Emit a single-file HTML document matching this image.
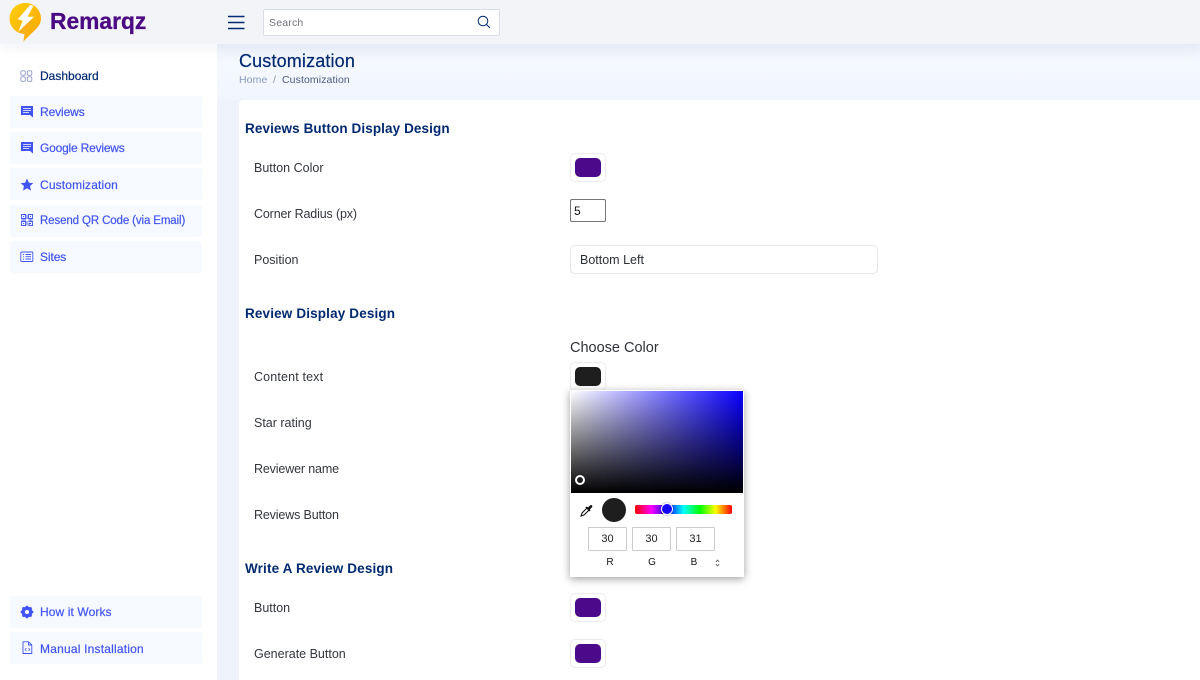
<!DOCTYPE html>
<html><head><meta charset="utf-8"><style>
*{box-sizing:border-box}
html,body{margin:0;padding:0}
body{width:1200px;height:680px;overflow:hidden;position:relative;background:#eef3fc;font-family:"Liberation Sans",sans-serif;color:#2b2f36}
.a{position:absolute}
.t{position:absolute;white-space:nowrap;line-height:16px}
.nav{position:absolute;left:10px;width:192px;height:32px;background:#f6f9ff;border-radius:3px}
.nt{position:absolute;left:40px;white-space:nowrap;font-size:12px;line-height:16px;color:#4154f1;-webkit-text-stroke:.2px #4154f1}
.ic{position:absolute;left:20px}
.h{position:absolute;left:245px;white-space:nowrap;font-size:13.5px;font-weight:bold;line-height:18px;color:#012970;letter-spacing:.1px}
.l{position:absolute;left:254px;white-space:nowrap;font-size:12.5px;line-height:16px;color:#33373d}
.sw{position:absolute;left:570px;width:36px;height:29px;background:#fff;border:1px solid #ececf0;border-radius:5px}
.sw i{position:absolute;left:4px;top:4px;width:26px;height:19px;border-radius:5px;background:#4b0a8a;display:block}
.rgb{position:absolute;top:527px;width:39px;height:24px;border:1px solid #ccc;border-radius:1px;background:#fff;text-align:center;font-size:11px;line-height:22px;color:#222}
.rl{position:absolute;top:557px;font-size:10px;line-height:12px;color:#111;width:20px;text-align:center}
</style></head><body>
<div class="a" style="left:217px;top:44px;width:983px;height:56px;background:linear-gradient(#eef2fb,#f5f8ff 35%,#f1f5fd)"></div>
<div class="a" style="left:239px;top:100px;width:961px;height:580px;background:#fff;border-radius:4px 0 0 0"></div>
<div class="a" style="left:0;top:44px;width:217px;height:636px;background:#fff"></div>
<div class="a" style="left:0;top:0;width:1200px;height:44px;background:#f2f4f7;box-shadow:0 3px 14px rgba(1,41,112,.06)"></div>

<svg class="a" style="left:9px;top:2px" width="34" height="40" viewBox="0 0 34 40">
<defs><linearGradient id="g" x1="0" y1="0" x2="1" y2="1"><stop offset="0" stop-color="#ffd000"/><stop offset="1" stop-color="#f9a30a"/></linearGradient></defs>
<path d="M16.500 1A15.500 15.500 0 0 1 32 16.500C32 25 24 29 14.300 39.700C16 36 16 34 15.500 32A15.500 15.500 0 0 1 16.500 1Z" fill="url(#g)"/>
<path d="M21 3L8.700 17.300L13.700 18.700L9.300 29.700L25.300 14.700L18.700 14.700L24.300 4Z" fill="#fff"/>
<path d="M9.300 29.700L25.300 14.700L21 23L14.300 39.700L15.500 32Z" fill="#fbb01a"/>
</svg>
<div class="t" style="left:50px;top:8px;font-size:22.800px;line-height:26px;font-weight:bold;color:#4b0a82;-webkit-text-stroke:.3px #4b0a82">Remarqz</div>

<svg class="a" style="left:228px;top:15px" width="17" height="15"><path d="M0 1.500H16.500M0 7.500H16.500M0 13.500H16.500" stroke="#012970" stroke-width="1.600"/></svg>
<div class="a" style="left:263px;top:9px;width:237px;height:27px;background:#fff;border:1px solid #d9dde6;border-radius:2px"></div>
<div class="t" style="left:269px;top:15px;font-size:10.500px;color:#6f7278;letter-spacing:.2px">Search</div>
<svg class="a" style="left:477px;top:15px" width="14" height="14" fill="none" stroke="#012970" stroke-width="1"><circle cx="6" cy="6" r="4.800"/><path d="M9.500 9.500L13 13"/></svg>

<svg class="ic" style="top:70px" width="13" height="12" fill="none" stroke="#8f9cc0" stroke-width=".9"><rect x=".8" y=".8" width="4.500" height="4.500" rx="1.300"/><rect x="7.300" y=".8" width="4.500" height="4.500" rx="1.300"/><rect x=".8" y="6.800" width="4.500" height="4.500" rx="1.300"/><rect x="7.300" y="6.800" width="4.500" height="4.500" rx="1.300"/></svg>
<div class="nt" style="top:68px;color:#012970;-webkit-text-stroke:.2px #012970">Dashboard</div>

<div class="nav" style="top:96px"></div>
<svg class="ic" style="top:105px" width="14" height="13"><path d="M1 1H13V12.500L10 10H1Z" fill="#4154f1"/><path d="M3 3.500H11M3 5.500H11M3 7.500H9" stroke="#fff" stroke-width=".8"/></svg>
<div class="nt" style="top:104px;letter-spacing:-.1px">Reviews</div>

<div class="nav" style="top:132px"></div>
<svg class="ic" style="top:141px" width="14" height="13"><path d="M1 1H13V12.500L10 10H1Z" fill="#4154f1"/><path d="M3 3.500H11M3 5.500H11M3 7.500H9" stroke="#fff" stroke-width=".8"/></svg>
<div class="nt" style="top:140px;letter-spacing:-.2px">Google Reviews</div>

<div class="nav" style="top:168px"></div>
<svg class="ic" style="top:178px" width="14" height="13"><path d="M7 .5L8.900 4.700L13.300 5.100L10 8.100L11 12.600L7 10.300L3 12.600L4 8.100L.7 5.100L5.100 4.700Z" fill="#4154f1"/></svg>
<div class="nt" style="top:177px;letter-spacing:.15px">Customization</div>

<div class="nav" style="top:205px"></div>
<svg class="ic" style="top:214px;left:21px" width="12" height="12" fill="none" stroke="#4154f1" stroke-width=".9"><path d="M.5.500H4.500V4.500H.5ZM7.500.500H11.500V4.500H7.500ZM.5 7.500H4.500V11.500H.5ZM2 2.500H3M9 2.500H10M2 9.500H3M.5 6H5M7.500 6H11.500M6 .5V5M6 7V11.500M7.500 7.500H11.500V11.500H8V9.500H10"/></svg>
<div class="nt" style="top:213px;font-size:11.500px;letter-spacing:-.12px">Resend QR Code (via Email)</div>

<div class="nav" style="top:241px"></div>
<svg class="ic" style="top:251px" width="14" height="12" fill="none" stroke="#4154f1" stroke-width=".9"><rect x=".8" y="1" width="12" height="9.500" rx=".8"/><path d="M3 3.500H4M5.500 3.500H11M3 5.700H4M5.500 5.700H11M3 8H4M5.500 8H11"/></svg>
<div class="nt" style="top:249px;letter-spacing:-.1px">Sites</div>

<div class="nav" style="top:596px"></div>
<svg class="ic" style="top:605px" width="14" height="14"><circle cx="7" cy="7" r="4.300" fill="none" stroke="#4154f1" stroke-width="2.500"/><path d="M7 .7V13.300M.7 7H13.300M2.500 2.500L11.500 11.500M11.500 2.500L2.500 11.500" stroke="#4154f1" stroke-width="2"/><circle cx="7" cy="7" r="2" fill="#fff"/></svg>
<div class="nt" style="top:604px;letter-spacing:.1px">How it Works</div>

<div class="nav" style="top:632px"></div>
<svg class="ic" style="top:641px;left:22px" width="11" height="14" fill="none" stroke="#4154f1" stroke-width=".9"><path d="M1 .8H6.500L9.800 4V12.500H1ZM6.500 .8V4H9.800"/><path d="M4.300 7L3 8.500L4.300 10M6.500 7L7.800 8.500L6.500 10" stroke-width=".7"/></svg>
<div class="nt" style="top:641px;letter-spacing:.2px">Manual Installation</div>

<div class="t" style="left:239px;top:51px;font-size:18px;line-height:20px;color:#012970;-webkit-text-stroke:.2px #012970;letter-spacing:.15px">Customization</div>
<div class="t" style="left:239px;top:72px;font-size:10.500px;color:#8a9bc0;letter-spacing:.1px">Home</div>
<div class="t" style="left:273px;top:72px;font-size:10.500px;color:#8a93a8">/</div>
<div class="t" style="left:282px;top:72px;font-size:10.500px;color:#4a5a80;letter-spacing:.1px">Customization</div>

<div class="h" style="top:120px">Reviews Button Display Design</div>
<div class="l" style="top:160px">Button Color</div>
<div class="sw" style="top:153px"><i></i></div>
<div class="l" style="top:206px;letter-spacing:-.15px">Corner Radius (px)</div>
<div class="a" style="left:570px;top:199px;width:36px;height:23px;background:#fff;border:1px solid #767676;border-radius:2px;font-size:12px;line-height:22px;padding-left:3px;color:#111">5</div>
<div class="l" style="top:252px">Position</div>
<div class="a" style="left:570px;top:245px;width:308px;height:29px;background:#fff;border:1px solid #e4e6ea;border-radius:5px"></div>
<div class="t" style="left:580px;top:252px;font-size:12.500px;color:#2b2f36">Bottom Left</div>

<div class="h" style="top:305px;letter-spacing:.15px">Review Display Design</div>
<div class="t" style="left:570px;top:340px;font-size:14.500px;color:#2f3238">Choose Color</div>
<div class="l" style="top:369px;letter-spacing:.15px">Content text</div>
<div class="sw" style="top:362px"><i style="background:#1e1e1f"></i></div>
<div class="l" style="top:415px">Star rating</div>
<div class="l" style="top:461px;letter-spacing:-.15px">Reviewer name</div>
<div class="l" style="top:507px;letter-spacing:-.15px">Reviews Button</div>

<div class="h" style="top:560px;letter-spacing:.15px">Write A Review Design</div>
<div class="l" style="top:600px">Button</div>
<div class="sw" style="top:593px"><i></i></div>
<div class="l" style="top:646px">Generate Button</div>
<div class="sw" style="top:639px"><i></i></div>

<div class="a" style="left:570px;top:390px;width:174px;height:187px;background:#fff;box-shadow:0 2px 8px rgba(0,0,0,.38)"></div>
<div class="a" style="left:571px;top:391px;width:172px;height:102px;background:linear-gradient(to top,#000,rgba(0,0,0,0)),linear-gradient(to right,#fff,#0800ff)"></div>
<div class="a" style="left:575px;top:475px;width:10px;height:10px;border:2px solid #fff;border-radius:50%;box-shadow:0 0 1px #000"></div>
<svg class="a" style="left:580px;top:504px" width="13" height="13"><path d="M1 12L2 9L7.500 3.500L9.500 5.500L4 11Z" fill="#fff" stroke="#111" stroke-width="1.100"/><path d="M6.500 2.500L8 3.500L10 1.500Q11 .5 12 1.500Q12.800 2.500 11.800 3.500L9.800 5.500L10.500 6.500L9.500 7.500L5.500 3.500Z" fill="#111"/></svg>
<div class="a" style="left:602px;top:498px;width:24px;height:24px;border-radius:50%;background:#1e1e1f"></div>
<div class="a" style="left:635px;top:505px;width:97px;height:9px;border-radius:2px;background:linear-gradient(to right,#f00,#f0f 17%,#00f 33%,#0ff 50%,#0f0 67%,#ff0 83%,#f00)"></div>
<div class="a" style="left:661px;top:503px;width:12px;height:12px;border-radius:50%;background:#1400ff;border:1.500px solid #fff;box-shadow:0 0 2px rgba(0,0,0,.4)"></div>
<div class="rgb" style="left:588px">30</div>
<div class="rgb" style="left:632px">30</div>
<div class="rgb" style="left:676px">31</div>
<div class="rl" style="left:600px">R</div>
<div class="rl" style="left:642px">G</div>
<div class="rl" style="left:684px">B</div>
<svg class="a" style="left:715px;top:559px" width="5" height="8" fill="none" stroke="#444" stroke-width=".7"><path d="M.8 3L2.500 1L4.200 3M.8 5L2.500 7L4.200 5"/></svg>
</body></html>
